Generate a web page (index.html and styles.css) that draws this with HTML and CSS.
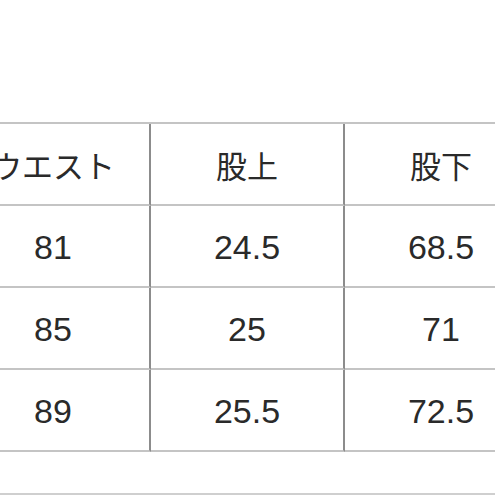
FILE: index.html
```html
<!DOCTYPE html>
<html lang="ja">
<head>
<meta charset="utf-8">
<link rel="stylesheet" href="styles.css">
</head>
<body>
<div class="page">
  <div class="size-table">
    <div class="cell head">ウエスト</div>
    <div class="cell head">股上</div>
    <div class="cell head">股下</div>
    <div class="cell">81</div>
    <div class="cell">24.5</div>
    <div class="cell">68.5</div>
    <div class="cell">85</div>
    <div class="cell">25</div>
    <div class="cell">71</div>
    <div class="cell">89</div>
    <div class="cell">25.5</div>
    <div class="cell">72.5</div>
  </div>
  <div class="rule"></div>
</div>
</body>
</html>
```
FILE: styles.css
```css
html, body {
  margin: 0;
  padding: 0;
  background: #ffffff;
  overflow: hidden;
}
.page {
  width: 495px;
  height: 495px;
  overflow: hidden;
  padding-top: 122px;
  box-sizing: border-box;
}
.size-table {
  display: grid;
  grid-template-columns: 194px 194px 194px;
  grid-auto-rows: 82px;
  margin-left: -43px;
  width: 582px;
  border-top: 2px solid #c4c4c4;
}
.cell {
  display: flex;
  align-items: center;
  justify-content: center;
  border-right: 2px solid #8c8c8c;
  border-bottom: 2px solid #c4c4c4;
  font-family: "Liberation Sans", "Noto Sans CJK JP", sans-serif;
  font-size: 34px;
  color: #2a2a2a;
  padding-top: 2px;
  box-sizing: border-box;
}
.cell.head {
  font-family: "Noto Sans CJK JP", sans-serif;
  font-size: 31px;
  padding-top: 0;
}
.rule {
  margin-top: 41px;
  border-top: 2px solid #cfcfcf;
}
```
